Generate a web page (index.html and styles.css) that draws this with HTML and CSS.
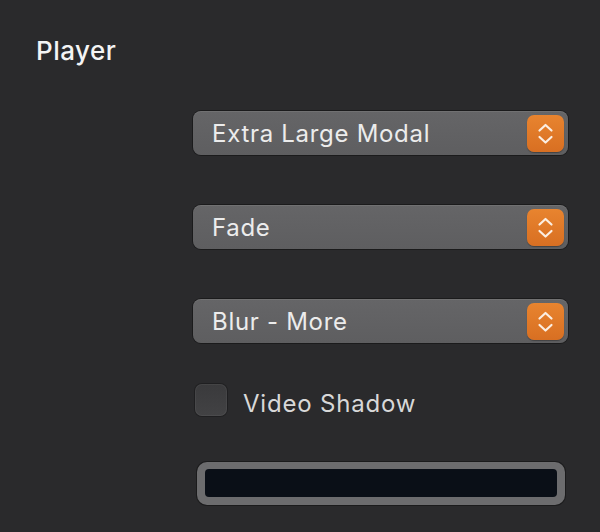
FILE: index.html
```html
<!DOCTYPE html>
<html>
<head>
<meta charset="utf-8">
<link rel="stylesheet" href="styles.css">
</head>
<body>
<div class="panel">
  <h2 class="title">Player</h2>
  <div class="form">
    <div class="select sel-first">
      <span class="sel-text">Extra Large Modal</span>
      <span class="stepper"><svg width="37" height="37" viewBox="0 0 37 37"><path d="M12.5 15.5 L18.5 10 L24.5 15.5" fill="none" stroke="#fbeee2" stroke-width="2.2" stroke-linecap="round" stroke-linejoin="round"/><path d="M12.5 22 L18.5 27.5 L24.5 22" fill="none" stroke="#fbeee2" stroke-width="2.2" stroke-linecap="round" stroke-linejoin="round"/></svg></span>
    </div>
    <div class="select">
      <span class="sel-text">Fade</span>
      <span class="stepper"><svg width="37" height="37" viewBox="0 0 37 37"><path d="M12.5 15.5 L18.5 10 L24.5 15.5" fill="none" stroke="#fbeee2" stroke-width="2.2" stroke-linecap="round" stroke-linejoin="round"/><path d="M12.5 22 L18.5 27.5 L24.5 22" fill="none" stroke="#fbeee2" stroke-width="2.2" stroke-linecap="round" stroke-linejoin="round"/></svg></span>
    </div>
    <div class="select">
      <span class="sel-text">Blur - More</span>
      <span class="stepper"><svg width="37" height="37" viewBox="0 0 37 37"><path d="M12.5 15.5 L18.5 10 L24.5 15.5" fill="none" stroke="#fbeee2" stroke-width="2.2" stroke-linecap="round" stroke-linejoin="round"/><path d="M12.5 22 L18.5 27.5 L24.5 22" fill="none" stroke="#fbeee2" stroke-width="2.2" stroke-linecap="round" stroke-linejoin="round"/></svg></span>
    </div>
    <label class="check-row">
      <span class="checkbox"></span>
      <span class="check-label">Video Shadow</span>
    </label>
    <div class="well"><div class="well-inner"></div></div>
  </div>
</div>
</body>
</html>
```
FILE: styles.css
```css
html, body {
  margin: 0;
  padding: 0;
  background: #2a2a2c;
}
body {
  width: 600px;
  height: 532px;
  overflow: hidden;
  font-family: Inter, "Liberation Sans", sans-serif;
}
.panel {
  padding-top: 36px;
}
.title {
  margin: 0 0 0 36px;
  font-size: 26px;
  line-height: 30px;
  font-weight: 500;
  color: #f4f4f4;
  letter-spacing: 0.5px;
}
.form {
  margin-left: 193px;
  width: 375px;
  display: flex;
  flex-direction: column;
}
.select {
  height: 44px;
  box-sizing: border-box;
  border-radius: 8px;
  background: linear-gradient(#656567, #5e5e60);
  box-shadow: 0 0 0 1px rgba(0,0,0,0.35), inset 0 1px 0 rgba(255,255,255,0.08);
  display: flex;
  align-items: center;
  justify-content: space-between;
  padding: 0 4px 0 19px;
  margin-top: 50px;
}
.sel-first {
  margin-top: 45px;
}
.sel-text {
  font-size: 24px;
  color: #ececec;
  letter-spacing: 0.7px;
}
.stepper {
  width: 37px;
  height: 37px;
  border-radius: 7px;
  background: linear-gradient(#e8842f, #d86f22);
  box-shadow: 0 1px 1px rgba(0,0,0,0.3);
  display: block;
}
.stepper svg {
  display: block;
}
.check-row {
  display: flex;
  align-items: center;
  margin-top: 40px;
  margin-left: 2px;
  height: 33px;
}
.checkbox {
  width: 32px;
  height: 32px;
  box-sizing: border-box;
  border-radius: 7px;
  background: linear-gradient(#3a3a3c, #424244);
  box-shadow: inset 0 0 0 1px rgba(255,255,255,0.05), 0 0 0 1px rgba(0,0,0,0.25);
}
.check-label {
  margin-left: 16px;
  padding-top: 8px;
  font-size: 24px;
  color: #d8d8d8;
  letter-spacing: 0.8px;
}
.well {
  margin-top: 46px;
  margin-left: 4px;
  width: 368px;
  height: 43px;
  box-sizing: border-box;
  padding: 7px 8px 8px 8px;
  border-radius: 10px;
  background: #6c6c6e;
  box-shadow: 0 0 0 1px rgba(0,0,0,0.35);
}
.well-inner {
  height: 100%;
  border-radius: 4px;
  background: #0a0f17;
}
```
